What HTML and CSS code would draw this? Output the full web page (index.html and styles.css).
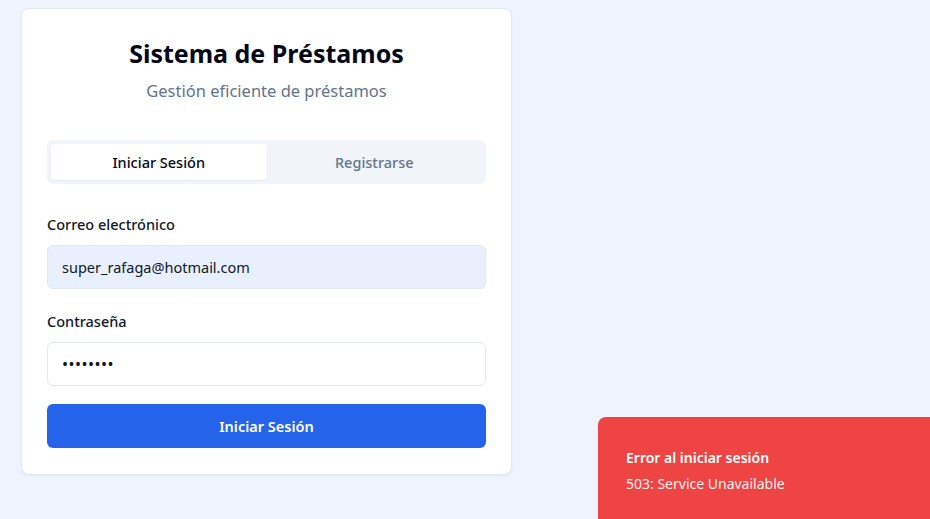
FILE: index.html
```html
<!DOCTYPE html>
<html lang="es">
<head>
<meta charset="utf-8">
<title>Sistema de Préstamos</title>
<link rel="stylesheet" href="styles.css">
</head>
<body>
<main class="page">
  <section class="card">
    <h1 class="title">Sistema de Préstamos</h1>
    <p class="subtitle">Gestión eficiente de préstamos</p>
    <div class="tabs">
      <button class="tab tab-active" type="button">Iniciar Sesión</button>
      <button class="tab" type="button">Registrarse</button>
    </div>
    <form class="form">
      <label class="label" for="email">Correo electrónico</label>
      <input class="input input-filled" id="email" type="email" value="super_rafaga@hotmail.com">
      <label class="label label-second" for="pass">Contraseña</label>
      <input class="input input-pass" id="pass" type="password" value="12345678">
      <button class="submit" type="button">Iniciar Sesión</button>
    </form>
  </section>
</main>
<div class="toast" role="alert">
  <div class="toast-title">Error al iniciar sesión</div>
  <div class="toast-desc">503: Service Unavailable</div>
</div>
</body>
</html>
```

FILE: styles.css
```css
* { box-sizing: border-box; }
html, body {
  margin: 0;
  height: 100%;
}
body {
  background: #eef3fd;
  font-family: "Noto Sans", "Open Sans", sans-serif;
  color: #0f172a;
  overflow: hidden;
}
.page {
  padding: 8px 0 0 21px;
}
.card {
  width: 491px;
  background: #ffffff;
  border: 1px solid #e2e8f0;
  border-radius: 8px;
  box-shadow: 0 1px 2px rgba(15, 23, 42, 0.05);
  padding: 28px 25px 26px;
}
.title {
  margin: 0;
  text-align: center;
  font-size: 25px;
  line-height: 32px;
  font-weight: 700;
  color: #020617;
}
.subtitle {
  margin: 8px 0 0;
  text-align: center;
  font-size: 16.5px;
  line-height: 28px;
  color: #64748b;
}
.tabs {
  margin-top: 35px;
  display: grid;
  grid-template-columns: 1fr 1fr;
  padding: 4px;
  height: 44px;
  background: #f1f5f9;
  border-radius: 6px;
}
.tab {
  border: 0;
  background: transparent;
  font-family: inherit;
  font-size: 14.5px;
  font-weight: 500;
  color: #64748b;
  border-radius: 4px;
  padding: 0;
}
.tab-active {
  background: #ffffff;
  color: #020617;
  box-shadow: 0 1px 2px rgba(15, 23, 42, 0.06);
}
.form {
  display: flex;
  flex-direction: column;
  margin-top: 29px;
}
.label {
  font-size: 14.5px;
  line-height: 22px;
  font-weight: 500;
  margin-bottom: 10px;
  color: #0f172a;
}
.label-second {
  margin-top: 21px;
}
.input {
  height: 44px;
  border: 1px solid #e2e8f0;
  border-radius: 6px;
  padding: 0 14px;
  font-family: inherit;
  font-size: 14.5px;
  color: #0f172a;
  background: #ffffff;
  outline: none;
}
.input-filled {
  background: #e8f0fe;
}
.input-pass {
  font-size: 16px;
  letter-spacing: 0.5px;
}
.submit {
  margin-top: 18px;
  height: 44px;
  border: 0;
  border-radius: 6px;
  background: #2563eb;
  color: #ffffff;
  font-family: inherit;
  font-size: 14.5px;
  font-weight: 600;
}
.toast {
  position: fixed;
  left: 598px;
  top: 417px;
  width: 360px;
  height: 130px;
  background: #ef4444;
  border-radius: 8px;
  padding: 30px 28px;
  color: #ffffff;
}
.toast-title {
  font-size: 14px;
  line-height: 22px;
  font-weight: 600;
}
.toast-desc {
  margin-top: 4px;
  font-size: 14px;
  line-height: 22px;
  opacity: 0.92;
}
```
